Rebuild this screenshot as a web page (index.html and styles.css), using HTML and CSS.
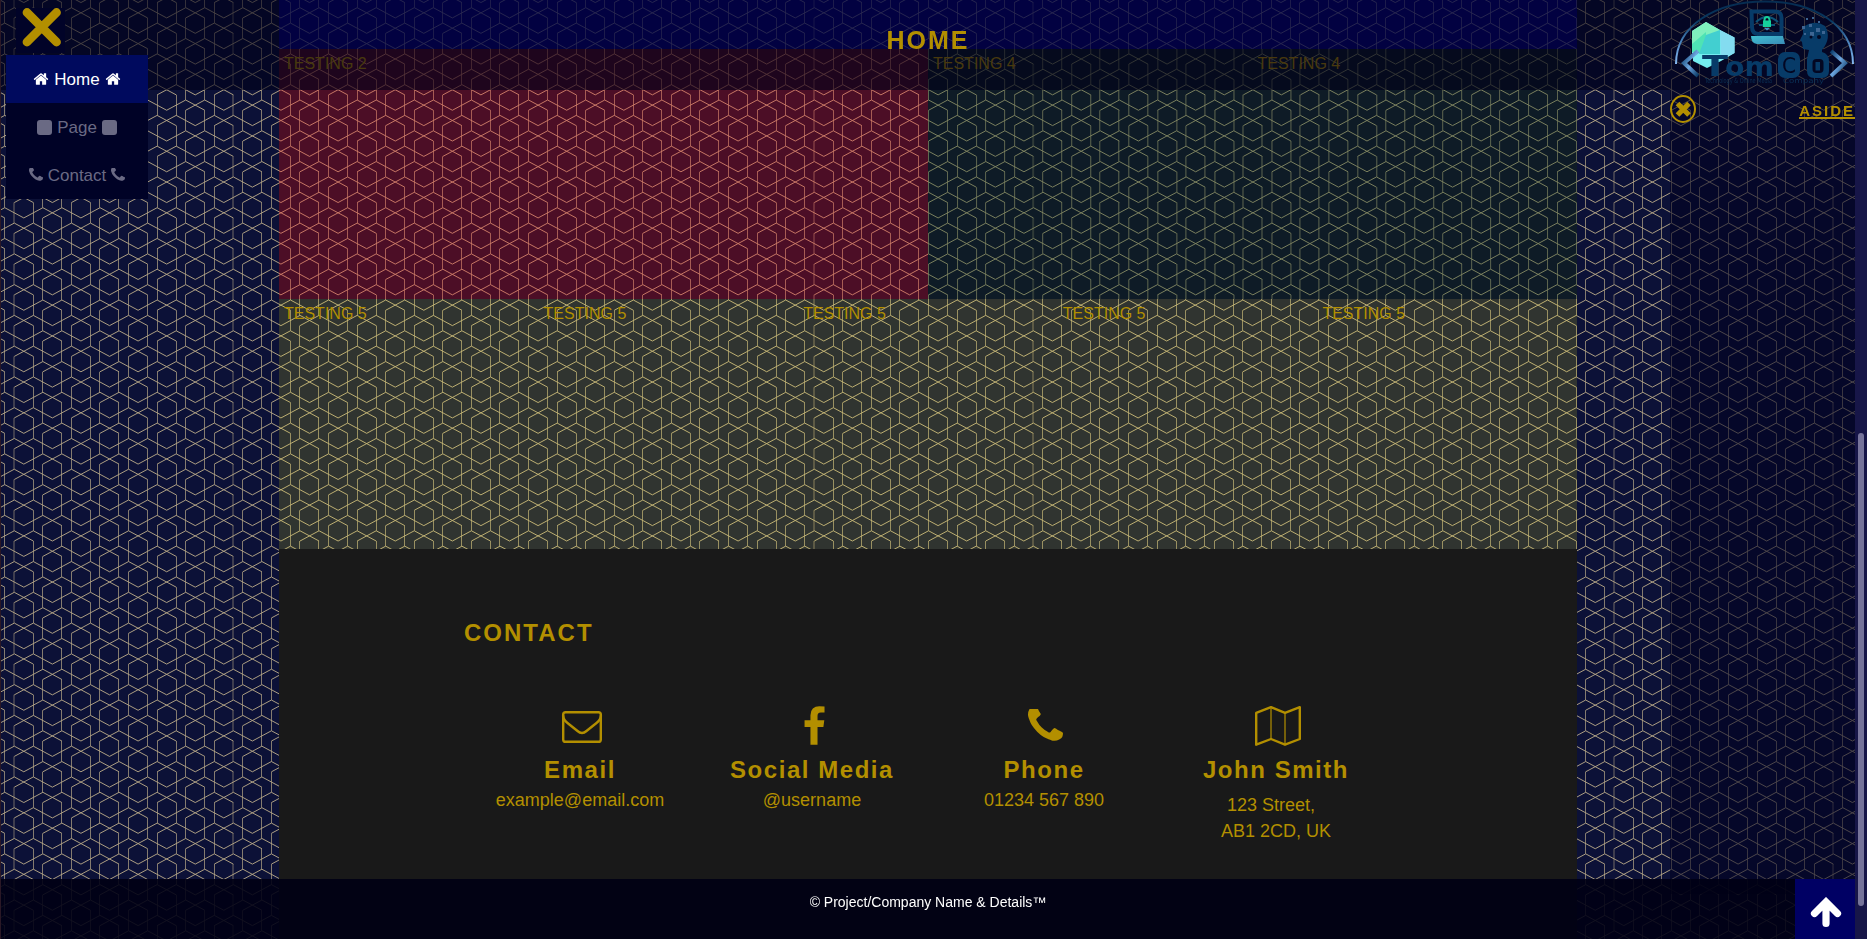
FILE: index.html
```html
<!DOCTYPE html>
<html lang="en">
<head>
<meta charset="utf-8">
<title>Home</title>
<link rel="stylesheet" href="styles.css">
<script src="hexagons.js"></script>
</head>
<body>
<svg class="defs" width="0" height="0" aria-hidden="true">
  <symbol id="home" viewBox="0 0 1792 1792"><path d="M1472 992v480q0 26-19 45t-45 19h-384v-384h-256v384h-384q-26 0-45-19t-19-45v-480q0-1 .5-3t.5-3l575-474 575 474q1 2 1 6zm223-69l-62 74q-8 9-21 11h-3q-13 0-21-7l-692-577-692 577q-12 8-24 7-13-2-21-11l-62-74q-8-10-7-23.5t11-21.5l719-599q32-26 76-26t76 26l244 204v-195q0-14 9-23t23-9h192q14 0 23 9t9 23v408l219 182q10 8 11 21.5t-7 23.5z"/></symbol>
  <symbol id="phone" viewBox="192 256 1408 1408"><path d="M1600 1240q0 27-10 70.5t-21 68.5q-21 50-122 106-94 51-186 51-27 0-53-3.5t-57.5-12.5-47-14.5-55.5-20.5-49-18q-98-35-175-83-127-79-264-216t-216-264q-48-77-83-175-3-9-18-49t-20.5-55.5-14.5-47-12.5-57.5-3.5-53q0-92 51-186 56-101 106-122 25-11 68.5-21t70.5-10q14 0 21 3 18 6 53 76 11 19 30 54t35 63.5 31 53.5q3 4 17.5 25t21.5 35.5 7 28.5q0 20-28.5 50t-62 55-62 53-28.5 46q0 9 5 22.5t8.5 20.5 14 24 11.5 19q76 137 174 235t235 174q2 1 19 11.5t24 14 20.5 8.5 22.5 5q18 0 46-28.5t53-62 55-62 50-28.5q14 0 28.5 7t35.5 21.5 25 17.5q25 15 53.5 31t63.5 35 54 30q70 35 76 53 3 7 3 21z"/></symbol>
</svg>

<main class="page">
  <section class="hero hex-blue"></section>
  <section class="row row-top">
    <div class="cell hex-red">TESTING 2</div>
    <div class="cell hex-teal">TESTING 4</div>
    <div class="cell hex-teal">TESTING 4</div>
  </section>
  <section class="row row-five hex-olive">
    <div class="cell">TESTING 5</div>
    <div class="cell">TESTING 5</div>
    <div class="cell">TESTING 5</div>
    <div class="cell">TESTING 5</div>
    <div class="cell">TESTING 5</div>
  </section>
  <section class="contact">
    <h2>CONTACT</h2>
    <div class="cards">
      <div class="card">
        <svg class="icon icon-wide" width="48" height="40" viewBox="0 0 48 40"><g fill="none" stroke="currentColor" stroke-width="2.4"><rect x="5.2" y="6.2" width="37.6" height="29.6" rx="2.4"/><path d="M5 9.500Q5.500 14 9.500 17L19.500 25Q24 29 28.500 25L38.500 17Q42.500 14 43 9.500"/></g></svg>
        <h3>Email</h3><p>example@email.com</p>
      </div>
      <div class="card">
        <svg class="icon icon-wide" width="40" height="40" viewBox="0 0 40 40"><path transform="translate(-.5 .2) scale(.0231)" d="M1343 12v264h-157q-86 0-116 36t-30 108v189h293l-39 296h-254v759h-306v-759h-255v-296h255v-218q0-186 104-288.500t277-102.500q147 0 228 12z"/></svg>
        <h3>Social Media</h3><p>@username</p>
      </div>
      <div class="card">
        <svg class="icon" width="32" height="40" viewBox="0 0 32 40"><use href="#phone" x="0" y="3" width="35" height="35"/></svg>
        <h3>Phone</h3><p>01234 567 890</p>
      </div>
      <div class="card">
        <svg class="icon icon-wide" width="46" height="40" viewBox="0 0 46 40"><path d="M1.200 6.900L16 1.200L30 6.900L44.800 1.200V33L30 38.700L16 33L1.200 38.700Z" fill="none" stroke="currentColor" stroke-width="2.400" stroke-linejoin="round"/><path d="M16 1.200V33M30 6.900V38.700" stroke="currentColor" stroke-width="1.200"/></svg>
        <h3>John Smith</h3><p class="address"><span>123 Street,</span><br>AB1 2CD, UK</p>
      </div>
    </div>
  </section>
</main>

<aside class="aside">
  <svg class="close" width="26" height="28" viewBox="0 0 26 28"><ellipse cx="13" cy="14" rx="12" ry="13" fill="none" stroke="currentColor" stroke-width="2"/><path d="M7.500 8.500l11.500 11.500M19 8.500L7.500 20" stroke="currentColor" stroke-width="5.200"/></svg>
  <h4>ASIDE</h4>
</aside>

<header class="header"><h1>HOME</h1></header>

<svg class="logo" width="182" height="90" viewBox="0 0 182 90">
  <defs>
    <linearGradient id="arc" x1="0" y1="1" x2="0" y2="0"><stop offset="0" stop-color="#86b8f0"/><stop offset=".35" stop-color="#4b84bd"/><stop offset=".7" stop-color="#08375f"/><stop offset="1" stop-color="#062c51"/></linearGradient>
    <linearGradient id="ang" x1="0" y1="0" x2="1" y2="1"><stop offset="0" stop-color="#0a3a6a"/><stop offset=".5" stop-color="#6da6df"/><stop offset="1" stop-color="#073763"/></linearGradient>
    <linearGradient id="base" x1="0" y1="0" x2="1" y2="1"><stop offset="0" stop-color="#3fbfd0"/><stop offset="1" stop-color="#3b8db8"/></linearGradient>
  </defs>
  <path d="M3 64C3 26 42 1.500 92 1.500S180 26 180 64" fill="none" stroke="url(#arc)" stroke-width="2"/>
  <path d="M19 31L33 22L47 30L61.500 37.500V53L48 61L34 68L20 61V54L19 53Z" fill="#74edf0"/>
  <path d="M19 31L33 22L47 30L33 37L19 45Z" fill="#7ff0bd"/>
  <path d="M19 44L33 32L33 54L19 52Z" fill="#4ee3b4"/>
  <path d="M33 35L47 30V54H26Z" fill="#42cfd0"/>
  <path d="M47 30L61.500 37.500V53L48 60Z" fill="#83dcf0"/>
  <path d="M25 51L11 63L25 76" fill="none" stroke="url(#ang)" stroke-width="4"/>
  <path d="M158 51L172 63L158 76" fill="none" stroke="url(#ang)" stroke-width="4"/>
  <path d="M78.500 11.500H102Q108.500 11.500 108.500 18V34H86Q79 34 79 27Z" fill="none" stroke="#073b68" stroke-width="4"/>
  <path d="M78 36H110L112 44H84Q78 43 78 36Z" fill="url(#base)"/>
  <path d="M83 22Q94 12 105 22M86 25h16" fill="none" stroke="#0b5277" stroke-width="2"/>
  <path d="M91.500 22v-2a2.500 3 0 0 1 5 0v2" fill="none" stroke="#16d09b" stroke-width="2"/><rect x="90" y="20.500" width="8" height="6.500" fill="#16d09b"/><path d="M91 28h6l-3 2.500z" fill="#4391c8"/>
  <path d="M130 27Q142 19 152 26Q159 38 149 50V52Q156 54 156 61V71Q156 78 149 78H141Q134 78 134 71V59L136 50L130 49L129 42L127 40L130 34Z" fill="#073b68"/>
  <g fill="#3d6592"><rect x="129" y="26" width="3" height="3"/><rect x="136" y="24" width="3" height="3"/><rect x="143" y="28" width="4" height="4"/><rect x="137" y="32" width="4" height="4"/><rect x="149" y="31" width="3" height="3"/><rect x="131" y="33" width="2" height="2"/><rect x="145" y="21" width="2" height="2"/><rect x="133" y="18" width="2" height="2"/><rect x="139" y="17" width="2" height="2"/></g>
  <g fill="#030722"><circle cx="138" cy="37" r="1.500"/><circle cx="146" cy="37" r="2"/><rect x="139.500" y="59" width="11" height="14" rx="4"/></g>
  <rect x="142.500" y="62" width="4.500" height="8.500" fill="#073b68"/>
  <rect x="105" y="52" width="22" height="26" rx="7" fill="#073b68"/>
  <g class="logo-text">
    <text x="29" y="76" font-size="28" textLength="26" lengthAdjust="spacingAndGlyphs">T</text>
    <text x="52" y="76" font-size="27" textLength="49" lengthAdjust="spacingAndGlyphs">om</text>
    <text x="109" y="73" font-size="21" fill="#030722" font-weight="normal" textLength="14" lengthAdjust="spacingAndGlyphs">C</text>
  </g>
  <g class="logo-small">
    <text x="32" y="83" textLength="67" lengthAdjust="spacingAndGlyphs">Technology &amp; Online Media</text>
    <text x="110" y="83" textLength="41" lengthAdjust="spacingAndGlyphs">Company</text>
  </g>
</svg>

<div class="toggle"><svg width="49" height="45" viewBox="0 0 49 45"><path d="M11 4.500L40.500 34M40.500 4.500L11 34" stroke="currentColor" stroke-width="8.800" stroke-linecap="round"/></svg></div>
<nav class="menu">
  <a class="active"><svg class="mi"><use href="#home"/></svg>Home<svg class="mi"><use href="#home"/></svg></a>
  <a><i class="square"></i>Page<i class="square"></i></a>
  <a><svg class="mi mp"><use href="#phone"/></svg>Contact<svg class="mi mp"><use href="#phone"/></svg></a>
</nav>

<footer class="footer">© Project/Company Name &amp; Details™</footer>
<a class="to-top"><svg width="32" height="32" viewBox="0 0 32 32"><path d="M4.500 16.500L16 5L27.500 16.500M16 7V26.500" fill="none" stroke="currentColor" stroke-width="7.200" stroke-linecap="round" stroke-linejoin="miter"/></svg></a>
<div class="scrollbar"><div class="thumb"></div></div>
<div class="edge"></div>
</body>
</html>
```

FILE: hexagons.js
```javascript
// Builds the 800x400 hexagon line tile once per tint and exposes it as a CSS variable.
(function () {
  var U = 400 / 42, V = 400 / 78;
  var diagonals = '', verticals = '', seams = '';
  function line(ox, oy, pts) {
    return 'M' + pts.map(function (p) {
      return (ox + p[0] * U).toFixed(2) + ' ' + (oy + p[1] * V).toFixed(2);
    }).join('L');
  }
  function upright(x, y) {
    var px = Math.floor(x - 0.1);
    var top = y.toFixed(2), len = (4 * V).toFixed(2);
    if (px === 14 || px === 233) seams += 'M' + px + ' ' + top + 'v' + len;
    else verticals += 'M' + (px + 0.5) + ' ' + top + 'v' + len;
  }
  for (var c = -1; c <= 14; c++) {
    for (var r = -2; r <= 13; r++) {
      var x = 1.5 * U + c * 6 * U, y = 2.5 * V + r * 6 * V;
      [[0, 0], [3, 3]].forEach(function (s) {
        var ox = x + s[0] * U, oy = y + s[1] * V;
        diagonals += line(ox, oy, [[0, -1], [2, 1]]) + line(ox, oy, [[2, -1], [0, 1]]);
        diagonals += line(ox, oy, [[2, -1], [4, 1], [6, -1]]);
        upright(ox, oy + V);
        upright(ox + 2 * U, oy + V);
      });
    }
  }
  function tile(color) {
    var svg = "<svg xmlns='http://www.w3.org/2000/svg' width='800' height='400'>" +
      "<g fill='none' stroke='" + color + "'>" +
      "<path stroke-width='.95' d='" + diagonals + "'/>" +
      "<path stroke-opacity='.72' d='" + verticals + "'/>" +
      "<path stroke-width='2' stroke-opacity='.3' d='" + seams + "'/></g></svg>";
    return 'url("data:image/svg+xml,' + encodeURIComponent(svg).replace(/'/g, '%27') + '")';
  }
  var tints = { tan: '#b3a485', salmon: '#cb7a66', moss: '#7f8561', straw: '#c3b474', violet: '#6461a4' };
  Object.keys(tints).forEach(function (name) {
    document.documentElement.style.setProperty('--hex-' + name, tile(tints[name]));
  });
})();
```

FILE: styles.css
```css
* { box-sizing: border-box; }

:root { --gold: #b38f00; }

body {
  margin: 0;
  height: 939px;
  overflow: hidden;
  font-family: "Liberation Sans", Arial, sans-serif;
  color: var(--gold);
  background: #0c1137 var(--hex-tan) fixed;
}
.defs { position: absolute; }
svg { fill: currentColor; }

.hex-blue { background: #050480 var(--hex-violet) fixed; }
.hex-red { background: #4c0e26 var(--hex-salmon) fixed; }
.hex-teal { background: #0e1b26 var(--hex-moss) fixed; }
.hex-olive { background: #303430 var(--hex-straw) fixed; }

.page { width: 1298px; margin-left: 279px; }
.hero { height: 49px; }
.row { display: grid; height: 250px; font-size: 16px; line-height: 20px; }
.row-top { grid-template-columns: 649px 1fr 1fr; }
.row-five { grid-template-columns: repeat(5, 1fr); }
.cell { padding: 5px; }

.contact { height: 390px; padding: 70px 185px 0; background: #191919; }
.contact h2 { margin: 0; font-size: 24px; line-height: 28px; letter-spacing: 2px; }
.cards { display: grid; grid-template-columns: repeat(4, 1fr); margin-top: 59px; text-align: center; }
.card h3 { margin: 8px 0 0; font-size: 24px; line-height: 32px; letter-spacing: 1.55px; }
.card p { margin: 0; padding-top: 3px; font-size: 18px; line-height: 22px; }
.icon { display: block; margin: 0 auto; overflow: visible; }
.icon-wide { position: relative; left: 2px; }
.card .address { padding-top: 6px; line-height: 26px; }
.address span { padding-right: 10px; }

.aside {
  position: fixed; top: 90px; left: 1670px; width: 185px; height: 804px;
  display: flex; justify-content: space-between; align-items: flex-start;
  background: rgba(0, 0, 30, .56);
}
.close { margin-top: 5px; }
.aside h4 { margin: 12px 0 0; font-size: 15px; line-height: 17px; letter-spacing: 2px; border-bottom: 2px solid; height: 17px; }

.header {
  position: fixed; top: 0; left: 0; width: 1855px; height: 90px;
  background: rgba(0, 0, 24, .6);
  text-align: center;
}
.header h1 { margin: 25px 0 0 1px; font-size: 25px; line-height: 30px; letter-spacing: 2px; }

.logo { position: fixed; left: 1673px; top: 0; }
.logo-text { font-family: "DejaVu Sans", sans-serif; font-weight: bold; fill: #073b68; }
.logo-small { font-family: "DejaVu Sans", sans-serif; font-size: 7px; fill: #0a3158; }

.toggle { position: fixed; left: 16px; top: 8px; width: 49px; height: 45px; background: #010328; }
.menu { position: fixed; left: 6px; top: 55px; width: 142px; background: #000226; font-size: 17px; color: #6a6a84; }
.menu a { display: flex; height: 48px; padding-top: 2px; align-items: center; justify-content: center; gap: 5px; }
.menu .active { background: #000a5e; color: #fff; }
.mi { width: 16px; height: 16px; margin-top: -2px; }
.mp { width: 14px; height: 14px; margin: -2px -.5px 0; }
.square { width: 15px; height: 15px; margin: -2px 0 0; border-radius: 3px; background: currentColor; }

.footer {
  position: fixed; left: 0; top: 879px; width: 1855px; height: 60px; padding-left: 1px;
  background: rgba(0, 0, 20, .9);
  color: #fff; text-align: center; font-size: 14px; line-height: 46px;
}
.to-top {
  position: fixed; left: 1795px; top: 879px; width: 60px; height: 60px;
  display: flex; align-items: center; justify-content: center;
  background: #000064; color: #fff;
}
.to-top svg { margin: 7px 0 0 2px; }
.scrollbar { position: fixed; left: 1855px; top: 0; width: 12px; height: 939px; padding: 433px 3px 0; background: #171648; }
.thumb { height: 473px; border-radius: 3px; background: #76749a; }
.edge { position: fixed; left: 0; top: 0; width: 1px; height: 939px; background: #2a1826; }
```
